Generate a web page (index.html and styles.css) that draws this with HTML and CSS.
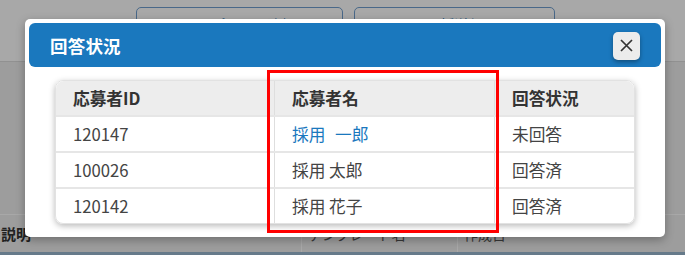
FILE: index.html
```html
<!doctype html>
<html lang="ja">
<head>
  <meta charset="UTF-8">
  <title>回答状況</title>
  <link rel="stylesheet" href="styles.css">
</head>
<body>
  <div class="page">
    <div class="toolbar">
      <button class="tool-btn tool-btn-wide">テンプレート追加</button>
      <button class="tool-btn">一括送信</button>
    </div>
    <div class="content">
      <div class="list-row">
        <div class="cell cell-label">説明</div>
        <div class="cell cell-name">テンプレート名</div>
        <div class="cell cell-date">作成日</div>
      </div>
    </div>
    <div class="footer"></div>
  </div>

  <div class="overlay"></div>

  <div class="modal">
    <div class="modal-head">
      <h2>回答状況</h2>
      <button class="close-btn" aria-label="閉じる">
        <svg width="13" height="13" viewBox="0 0 13 13">
          <path d="M1 1 L12 12 M12 1 L1 12" stroke="#333" stroke-width="1.7" fill="none"/>
        </svg>
      </button>
    </div>
    <div class="modal-body">
      <div class="table-card">
        <table class="answers">
          <thead>
            <tr>
              <th class="col-id">応募者ID</th>
              <th class="col-name">応募者名</th>
              <th class="col-status">回答状況</th>
            </tr>
          </thead>
          <tbody>
            <tr>
              <td>120147</td>
              <td><a href="#" class="link">採用 一郎</a></td>
              <td>未回答</td>
            </tr>
            <tr>
              <td>100026</td>
              <td>採用 太郎</td>
              <td>回答済</td>
            </tr>
            <tr>
              <td>120142</td>
              <td>採用 花子</td>
              <td>回答済</td>
            </tr>
          </tbody>
        </table>
        <div class="highlight"></div>
      </div>
    </div>
  </div>
</body>
</html>
```

FILE: styles.css
```css
body{
  margin: 0;
  width: 685px;
  height: 255px;
  overflow: hidden;
  font-family: "Noto Sans CJK JP", "Noto Sans", sans-serif;
  position: relative;
}
.page{
  display: flex;
  flex-direction: column;
  height: 255px;
  background: #fff;
}
.toolbar{
  height: 62px;
  display: flex;
  gap: 11px;
  padding: 7px 0 0 136px;
  box-sizing: border-box;
}
.tool-btn{
  width: 207px;
  height: 34px;
  background: #fff;
  border: 1px solid #6f9fd0;
  border-radius: 5px;
  color: #1a78be;
  font-family: inherit;
  font-size: 14px;
}
.tool-btn + .tool-btn{
  width: 201px;
}
.content{
  flex: 1;
  background: #eeeeee;
  border-top: 1px solid #dcdcdc;
  padding-top: 152px;
}
.list-row{
  display: flex;
  height: 37px;
  border-top: 1px solid #fff;
  align-items: center;
  font-size: 14px;
  color: #555;
}
.cell{
  height: 100%;
  display: flex;
  align-items: center;
  padding-left: 6px;
  box-sizing: border-box;
}
.cell-label{
  width: 301px;
  padding-left: 1px;
  font-weight: bold;
  color: #333;
  font-size: 15px;
}
.cell-name{
  width: 156px;
  border-left: 1px solid #fff;
}
.cell-date{
  flex: 1;
  border-left: 1px solid #fff;
}
.footer{
  height: 3px;
  background: #9cb9d2;
}

.overlay{
  position: absolute;
  inset: 0;
  background: rgba(0,0,0,0.34);
}

.modal{
  position: absolute;
  left: 25px;
  top: 19px;
  width: 640px;
  height: 218px;
  box-sizing: border-box;
  background: #fff;
  border-radius: 5px;
  padding: 4px;
  box-shadow: 0 3px 10px rgba(0,0,0,0.3);
}
.modal-head{
  height: 44px;
  background: #1a78be;
  border-radius: 6px;
  display: flex;
  align-items: center;
  justify-content: space-between;
  padding: 0 21px 0 21px;
}
.modal-head h2{
  margin: 0;
  color: #fff;
  font-size: 17.5px;
  font-weight: bold;
  letter-spacing: 0.2px;
}
.close-btn{
  width: 27px;
  height: 28px;
  margin-top: 1px;
  border: none;
  border-radius: 5px;
  background: #ececec;
  box-shadow: 0 2px 4px rgba(0,0,0,0.35);
  display: flex;
  align-items: center;
  justify-content: center;
  padding: 0;
}
.modal-body{
  padding: 13px 26px 0 26px;
}
.table-card{
  position: relative;
  border-radius: 8px;
  box-shadow: 0 2px 6px rgba(0,0,0,0.28);
  border: 1px solid #e2e2e2;
}
.answers{
  width: 100%;
  border-collapse: collapse;
  font-size: 16.7px;
  color: #444;
}
.answers th, .answers td{
  text-align: left;
  padding: 0 0 0 17px;
  border-left: 1px solid #dedede;
}
.answers th:first-child, .answers td:first-child{
  border-left: none;
}
.answers th{
  height: 34px;
  background: #ededed;
  font-weight: bold;
  color: #333;
}
.answers thead th:first-child{
  border-top-left-radius: 8px;
}
.answers thead th:last-child{
  border-top-right-radius: 8px;
}
.answers td{
  height: 34px;
  border-top: 2px solid #e6e6e6;
}
.col-id{
  width: 201px;
}
.col-name{
  width: 202px;
}
.link{
  color: #1a78be;
  text-decoration: none;
  word-spacing: 6px;
}
.highlight{
  position: absolute;
  left: 211px;
  top: -11px;
  width: 226px;
  height: 157px;
  border: 3px solid #ff0000;
}
```
